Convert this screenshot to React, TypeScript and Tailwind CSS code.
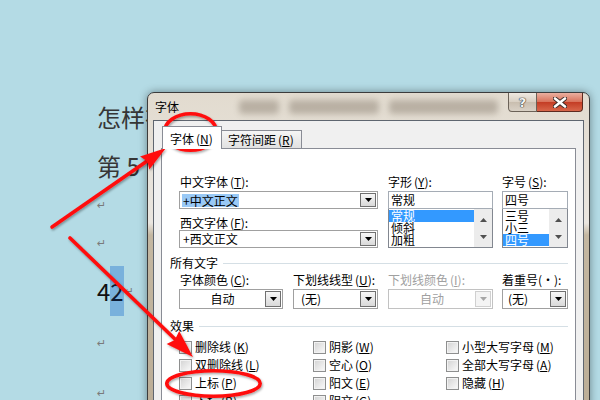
import React from "react";

const CJK = "font-['Noto_Sans_CJK_SC','Noto_Sans',sans-serif]";

function Key({ k }: { k: string }) {
  return (
    <span className="ml-[2px]">
      (<span className="underline underline-offset-1">{k}</span>)
    </span>
  );
}

function Tri({ up, color = "#000" }: { up?: boolean; color?: string }) {
  return (
    <svg width="7" height="4" viewBox="0 0 7 4">
      <path d={up ? "M0 4H7L3.5 0Z" : "M0 0H7L3.5 4Z"} fill={color} />
    </svg>
  );
}

function DropBtn({ disabled }: { disabled?: boolean }) {
  return (
    <div
      className={`my-[1px] mr-[1px] flex w-[16px] items-center justify-center border ${
        disabled ? "border-[#d0d0d0] bg-[#f4f4f4]" : "border-[#707070] bg-[linear-gradient(#f7f7f7,#d9d9d9)]"
      }`}
    >
      <Tri color={disabled ? "#a6a6a6" : "#000"} />
    </div>
  );
}

function Combo({
  w,
  h,
  children,
  disabled,
  center,
}: {
  w: string;
  h: string;
  children: React.ReactNode;
  disabled?: boolean;
  center?: boolean;
}) {
  return (
    <div className={`flex ${w} ${h} border ${disabled ? "border-[#c2c2c2]" : "border-[#a0a0a0]"} bg-white`}>
      <div className={`flex flex-1 items-center ${center ? "justify-center" : "pl-[1px]"} ${disabled ? "text-[#a0a0a0]" : ""}`}>
        {children}
      </div>
      <DropBtn disabled={disabled} />
    </div>
  );
}

function ListBox({ value, items, sel, w }: { value: string; items: string[]; sel: string; w: string }) {
  return (
    <div className={w}>
      <div className="h-[18px] border border-[#a5acb5] bg-white pl-[2px] leading-[16px]">{value}</div>
      <div className="flex h-[39px] border border-t-0 border-[#828790] bg-white">
        <div className="flex-1 pt-[1px]">
          {items.map((it) => (
            <div key={it} className={`h-[12px] pl-[2px] leading-[12px] ${it === sel ? "bg-[#3399ff] text-white" : ""}`}>
              {it}
            </div>
          ))}
        </div>
        <div className="flex w-[18px] flex-col bg-[#ececec]">
          <div className="flex flex-1 items-center justify-center pt-[2px]">
            <Tri up color="#505050" />
          </div>
          <div className="flex flex-1 items-center justify-center pb-[2px]">
            <Tri color="#505050" />
          </div>
        </div>
      </div>
    </div>
  );
}

function Check({ label, k }: { label: string; k: string }) {
  return (
    <div className="flex h-[18px] items-center">
      <span className="h-[13px] w-[13px] border border-[#8e8f8f] bg-[linear-gradient(135deg,#d2d2d2,#fbfbfb)] shadow-[inset_0_0_0_1px_#f2f2f2]" />
      <span className="ml-[3px]">
        {label}
        <Key k={k} />
      </span>
    </div>
  );
}

function Group({ title }: { title: string }) {
  return (
    <div className="flex h-[14px] items-center pl-[8px] pr-[7px]">
      <span>{title}</span>
      <span className="ml-[5px] h-px flex-1 bg-[#d5dfe5]" />
    </div>
  );
}

function Mark() {
  return <span className="font-['DejaVu_Sans',sans-serif] text-[11px] leading-none text-[#7a7a7a]">↵</span>;
}

export default function App() {
  return (
    <div className={`relative h-[400px] w-[600px] overflow-hidden bg-[#b4dbe5] ${CJK}`}>
      {/* document behind the dialog */}
      <div className="flex flex-col pl-[97px] pt-[92px] text-[24px] text-[#363636]">
        <div className="flex h-[50px] w-[50px] items-center overflow-hidden whitespace-nowrap">怎样在</div>
        <div className="flex h-[48px] items-center whitespace-nowrap">第 5</div>
        <div className="flex h-[30px] items-center"><Mark /></div>
        <div className="flex h-[46px] items-center"><Mark /></div>
        <div className="flex h-[50px] items-center text-[#111]">
          <span>4</span>
          <span className="flex h-[50px] items-center bg-[#79b1dc] text-[#0d1b33]">2</span>
          <span className="ml-[1px] flex items-center"><Mark /></span>
        </div>
        <div className="flex h-[54px] items-center"><Mark /></div>
        <div className="flex h-[46px] items-center"><Mark /></div>
      </div>

      {/* font dialog window */}
      <div className="absolute left-[147px] top-[92px] h-[330px] w-[443px] rounded-t-[7px] border border-[#3c3c3c] bg-[linear-gradient(180deg,#e2dbcf_0px,#eae6e0_130px,#c4b7a1_142px,#bbad96_100%)] text-[12px] leading-[14px] text-black shadow-[0_0_9px_rgba(0,0,0,0.4)]">
        <div className="flex h-[27px]">
          <div className="pl-[7px] pt-[7px]">字体</div>
          <div className="flex-1 overflow-hidden pl-[60px] pr-[10px] pt-[7px]">
            <div className="flex h-[14px] gap-[10px] opacity-25 blur-[3px]">
              <span className="w-[40px] rounded bg-[#3d2e1e]" />
              <span className="w-[90px] rounded bg-[#3d2e1e]" />
              <span className="flex-1 rounded bg-[#3d2e1e]" />
            </div>
          </div>
          <div className="mr-[6px] flex h-[19px]">
            <div className="flex w-[29px] items-center justify-center rounded-bl-[4px] border border-t-0 border-[#6b6258] bg-[linear-gradient(#efe9e1,#d8cfc2_50%,#c9beaf_51%,#d9d1c6)]">
              <span className="font-['DejaVu_Sans',sans-serif] text-[13px] font-bold leading-none text-[#f4f4f4] [text-shadow:0_0_1px_#333,0_0_1px_#333,0_0_1px_#333]">?</span>
            </div>
            <div className="flex w-[46px] items-center justify-center rounded-br-[4px] border border-l-0 border-t-0 border-[#5d2a1f] bg-[linear-gradient(#eab0a0,#d9735c_48%,#c43d25_52%,#d8664a)]">
              <svg width="14" height="11" viewBox="0 0 14 11">
                <path d="M2 1.5L12 9.5M12 1.5L2 9.5" stroke="#3a2a26" strokeWidth="4.4" strokeLinecap="round" />
                <path d="M2 1.5L12 9.5M12 1.5L2 9.5" stroke="#fff" strokeWidth="2.6" strokeLinecap="round" />
              </svg>
            </div>
          </div>
        </div>

        <div className="mx-[5px] h-[320px] border border-[#5f6670] bg-[#f0f0f0] px-[7px] pt-[5px]">
          {/* tabs */}
          <div className="flex h-[22px] items-end pl-[1px]">
            <div className="relative z-10 -mb-px h-[23px] w-[60px] border border-b-0 border-[#898c95] bg-white pl-[7px] pt-[5px]">
              字体<Key k="N" />
            </div>
            <div className="h-[18px] w-[80px] border border-b-0 border-l-0 border-[#898c95] bg-[linear-gradient(#f5f5f5,#e1e1e1)] pl-[6px] pt-[2px]">
              字符间距<Key k="R" />
            </div>
          </div>

          {/* tab page */}
          <div className="h-[300px] border border-[#898c95] bg-white pt-[26px]">
            <div className="flex pl-[17px]">
              <div className="w-[199px]">
                <div className="pl-[1px]">中文字体<Key k="T" />:</div>
                <div className="mt-[2px]">
                  <Combo w="w-[199px]" h="h-[18px]">
                    <span className="ml-[1px] bg-[#99c9f6] px-[1px] leading-[13px]">+中文正文</span>
                  </Combo>
                </div>
                <div className="mt-[7px] pl-[1px]">西文字体<Key k="F" />:</div>
                <Combo w="w-[199px]" h="h-[18px]">
                  <span className="ml-[2px]">+西文正文</span>
                </Combo>
              </div>
              <div className="ml-[10px] w-[105px]">
                <div>字形<Key k="Y" />:</div>
                <div className="mt-[2px]">
                  <ListBox w="w-[105px]" value="常规" items={["常规", "倾斜", "加粗"]} sel="常规" />
                </div>
              </div>
              <div className="ml-[9px] w-[66px]">
                <div>字号<Key k="S" />:</div>
                <div className="mt-[2px]">
                  <ListBox w="w-[66px]" value="四号" items={["三号", "小三", "四号"]} sel="四号" />
                </div>
              </div>
            </div>

            <div className="mt-[8px]">
              <Group title="所有文字" />
            </div>

            <div className="mt-[3px] flex pl-[17px]">
              <div className="w-[104px]">
                <div className="pl-[1px]">字体颜色<Key k="C" />:</div>
                <div className="mt-[2px]">
                  <Combo w="w-[104px]" h="h-[20px]" center>自动</Combo>
                </div>
              </div>
              <div className="ml-[10px] w-[85px]">
                <div>下划线线型<Key k="U" />:</div>
                <div className="mt-[2px]">
                  <Combo w="w-[85px]" h="h-[20px]">
                    <span className="ml-[6px]">(无)</span>
                  </Combo>
                </div>
              </div>
              <div className="ml-[10px] w-[105px]">
                <div className="text-[#a0a0a0]">下划线颜色<Key k="I" />:</div>
                <div className="mt-[2px]">
                  <Combo w="w-[105px]" h="h-[20px]" center disabled>自动</Combo>
                </div>
              </div>
              <div className="ml-[9px] w-[66px]">
                <div className="whitespace-nowrap">着重号(·):</div>
                <div className="mt-[2px]">
                  <Combo w="w-[66px]" h="h-[20px]">
                    <span className="ml-[4px]">(无)</span>
                  </Combo>
                </div>
              </div>
            </div>

            <div className="mt-[10px]">
              <Group title="效果" />
            </div>

            <div className="mt-[5px] grid grid-cols-[134px_133px_1fr] pl-[17px]">
              <div>
                <Check label="删除线" k="K" />
                <Check label="双删除线" k="L" />
                <Check label="上标" k="P" />
                <Check label="下标" k="B" />
              </div>
              <div>
                <Check label="阴影" k="W" />
                <Check label="空心" k="O" />
                <Check label="阳文" k="E" />
                <Check label="阴文" k="G" />
              </div>
              <div>
                <Check label="小型大写字母" k="M" />
                <Check label="全部大写字母" k="A" />
                <Check label="隐藏" k="H" />
              </div>
            </div>
          </div>
        </div>
      </div>

      {/* red annotations drawn over the screenshot */}
      <svg className="pointer-events-none absolute left-0 top-0" width="600" height="400" viewBox="0 0 600 400">
        <defs>
          <filter id="sh" x="-20%" y="-20%" width="140%" height="140%">
            <feDropShadow dx="1" dy="1.5" stdDeviation="1.2" floodColor="#000" floodOpacity="0.35" />
          </filter>
        </defs>
        <g filter="url(#sh)" stroke="#ff1010" fill="none" strokeWidth="3.6">
          <ellipse cx="190.5" cy="132" rx="26" ry="18.3" />
          <ellipse cx="213.5" cy="383.5" rx="46.7" ry="12.8" />
          <line x1="52" y1="227" x2="150" y2="159" strokeLinecap="round" />
          <line x1="70" y1="238" x2="178" y2="342" strokeLinecap="round" />
        </g>
        <g filter="url(#sh)" fill="#ff1010">
          <polygon points="166,148 149.3,169.4 147.5,161.5 140.1,156.4" />
          <polygon points="193,357 166.6,344 174.8,340 179.2,331" />
        </g>
      </svg>
    </div>
  );
}
